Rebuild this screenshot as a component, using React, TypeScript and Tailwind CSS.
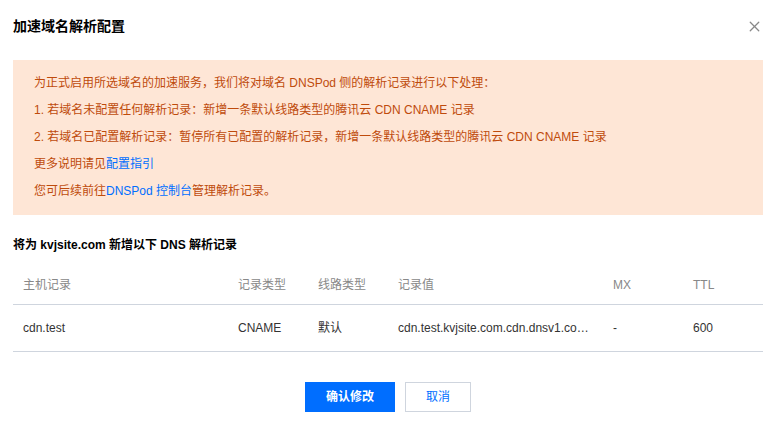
import { X } from "lucide-react";

const font = "font-['Liberation_Sans','Noto_Sans_CJK_SC',sans-serif]";

const cols = "grid grid-cols-[215px_80px_80px_215px_80px_80px]";

export default function App() {
  return (
    <div className={`relative w-[781px] h-[421px] bg-white text-[12px] text-[#333] ${font}`}>
      <div className="flex items-center justify-between pl-[13px] pr-[18px] pt-[16px] h-[36px]">
        <div className="text-[14px] font-bold text-[#000] leading-[20px]">加速域名解析配置</div>
        <button className="text-[#888]">
          <X size={17} strokeWidth={1.8} />
        </button>
      </div>

      <div className="ml-[13px] mr-[18px] mt-[24px] bg-[#fee6d6] pl-[21px] py-[10px] text-[#bf4b0c]">
        <div className="leading-[27px]">为正式启用所选域名的加速服务，我们将对域名 DNSPod 侧的解析记录进行以下处理：</div>
        <div className="leading-[27px]">1. 若域名未配置任何解析记录：新增一条默认线路类型的腾讯云 CDN CNAME 记录</div>
        <div className="leading-[27px]">2. 若域名已配置解析记录：暂停所有已配置的解析记录，新增一条默认线路类型的腾讯云 CDN CNAME 记录</div>
        <div className="leading-[27px]">
          更多说明请见<span className="text-[#006eff]">配置指引</span>
        </div>
        <div className="leading-[27px]">
          您可后续前往<span className="text-[#006eff]">DNSPod 控制台</span>管理解析记录。
        </div>
      </div>

      <div className="ml-[13px] mr-[18px]">
        <div className="mt-[21px] font-bold text-[#000] leading-[18px]">将为 kvjsite.com 新增以下 DNS 解析记录</div>

        <div className="mt-[11px]">
          <div className={`${cols} h-[40px] items-center text-[#888] border-b border-[#cfd5de]`}>
            <div className="px-[10px]">主机记录</div>
            <div className="px-[10px]">记录类型</div>
            <div className="px-[10px]">线路类型</div>
            <div className="px-[10px]">记录值</div>
            <div className="px-[10px]">MX</div>
            <div className="px-[10px]">TTL</div>
          </div>
          <div className={`${cols} h-[47px] items-center text-[#333] border-b border-[#cfd5de]`}>
            <div className="px-[10px]">cdn.test</div>
            <div className="px-[10px]">CNAME</div>
            <div className="px-[10px]">默认</div>
            <div className="px-[10px] truncate">cdn.test.kvjsite.com.cdn.dnsv1.com.cn</div>
            <div className="px-[10px]">-</div>
            <div className="px-[10px]">600</div>
          </div>
        </div>

        <div className="flex justify-center gap-[10px] mt-[30px]">
          <button className="w-[90px] h-[30px] bg-[#006eff] text-white font-bold">确认修改</button>
          <button className="w-[66px] h-[30px] border border-[#cfd5de] bg-white text-[#006eff]">取消</button>
        </div>
      </div>
    </div>
  );
}
